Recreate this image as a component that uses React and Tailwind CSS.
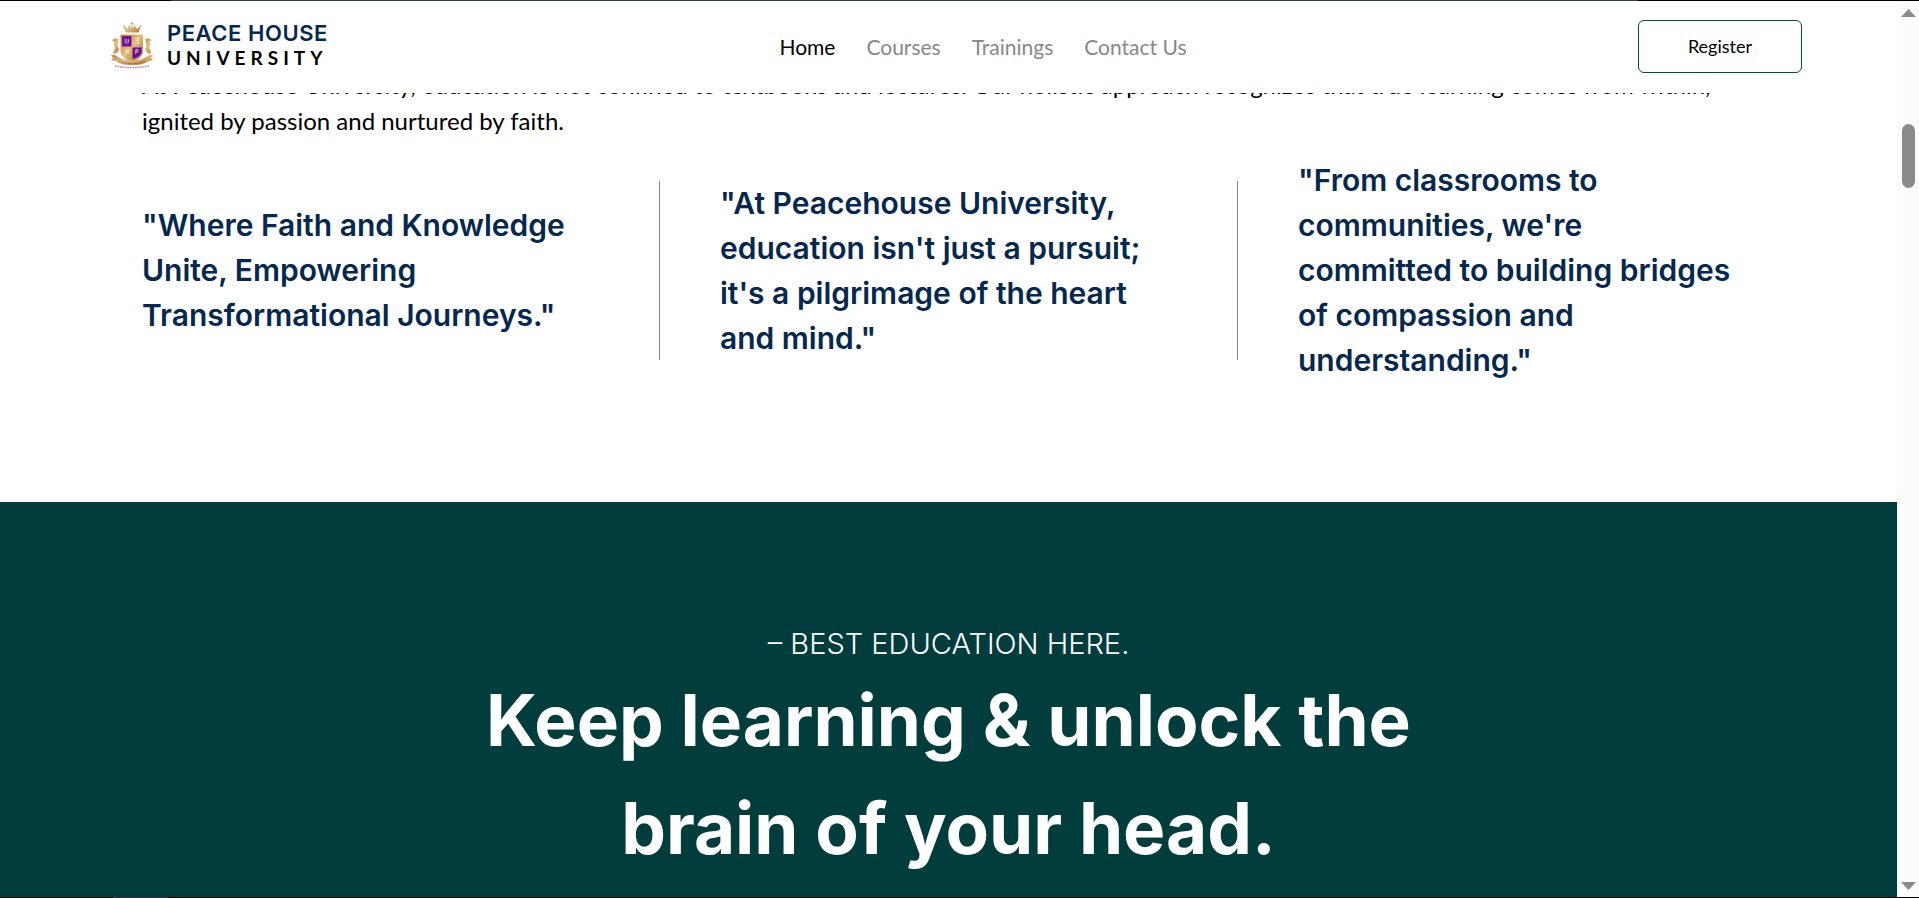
const navLinks = [
  { label: "Home", active: true },
  { label: "Courses" },
  { label: "Trainings" },
  { label: "Contact Us" },
];

function Crest() {
  return (
    <svg viewBox="0 0 44 48" className="h-12 w-11 shrink-0" aria-hidden="true">
      <defs>
        <linearGradient id="gold" x1="0" y1="0" x2="1" y2="1">
          <stop offset="0" stopColor="#b9803c" />
          <stop offset="0.45" stopColor="#e3bf82" />
          <stop offset="1" stopColor="#a8702c" />
        </linearGradient>
      </defs>
      {/* crown */}
      <path d="M15.5 10.5 14 4.5l3.600 2.300L19.500 3l2 2.800L22 1l.8 4.800L25 3l1.700 3.800L30.500 4.500l-1.700 6z" fill="url(#gold)" />
      <circle cx="22.200" cy="1.500" r="1.300" fill="#d9a95c" />
      <circle cx="14" cy="4.300" r="1" fill="#d9a95c" />
      <circle cx="30.500" cy="4.300" r="1" fill="#d9a95c" />
      {/* supporters */}
      <path d="M8.500 17c-3-2-5 0-6.500 1.500 2 .3 3 1.500 2 3C3 23 6 24.500 4.500 27c-1 1.500-1.500 3-1 5l4-1.500 1.500-3-1.500-4z" fill="url(#gold)" />
      <path d="M35.500 17c3-2 5 0 6.500 1.500-2 .3-3 1.500-2 3 1 1.500-2 3-.5 5.500 1 1.500 1.500 3 1 5l-4-1.500-1.500-3 1.500-4z" fill="url(#gold)" />
      {/* shield */}
      <path d="M10.500 12.500H33V29c0 5-5 8.500-11.300 11C15.500 37.500 10.500 34 10.500 29z" fill="url(#gold)" />
      <path d="M12 14h9.500v10.500H12z" fill="#6f1594" />
      <path d="M22.500 25.500H31.500V30c0 3-4 5.500-9 7z" fill="#6a0f92" />
      <path d="M15 17v3.500q1.700 1.500 3.500 0V17M16.800 17v3" stroke="#c9a0dc" strokeWidth="0.900" fill="none" />
      <path d="M25.500 16.500h3v5h-3M26 19h2" stroke="#f7e3bd" strokeWidth="1" fill="none" />
      <path d="M15 27.500h4v4h-4z" fill="#f0d7a8" />
      <path d="M25.800 32v-4.500h2v2.500h-2" stroke="#e4c5ee" strokeWidth="0.900" fill="none" />
      {/* ribbon */}
      <path d="M1 33l4.500.3c4.500 4 10 5 16.500 5s12-1 16.500-5L43 33l-2 3 2 2-5 1.300c-4 3-10 4-16 4s-12-1-16-4L1 38l2-2z" fill="url(#gold)" />
      <path d="M9 39.500q13 4.500 26 0" stroke="#8d5a22" strokeWidth="1" strokeDasharray="1.500 0.800" fill="none" />
      <path d="M5 43.800q17 3.600 34 0" stroke="#b98bd0" strokeWidth="1.400" strokeDasharray="1.800 0.700" fill="none" />
    </svg>
  );
}

function Header() {
  return (
    <header className="relative z-10 flex h-23 shrink-0 items-center justify-between bg-white pr-[95px] pb-0.5 pl-[110px]">
      <a href="#" className="flex items-center gap-[13px]">
        <Crest />
        <span className="flex flex-col">
          <span className="font-['Inter',sans-serif] text-[22px] leading-6 font-semibold tracking-wide text-[#04284f]">
            PEACE HOUSE
          </span>
          <span className="text-[19px] leading-[26px] font-bold tracking-[5px]">UNIVERSITY</span>
        </span>
      </a>
      <nav className="flex gap-[31px] pt-0.5 text-[21px] leading-8">
        {navLinks.map((link) => (
          <a key={link.label} href="#" className={link.active ? "text-black" : "text-[#888888]"}>
            {link.label}
          </a>
        ))}
      </nav>
      <button type="button" className="h-[53px] w-[164px] rounded-md border border-[#004d47] text-lg">
        Register
      </button>
    </header>
  );
}

function Quote({ children }) {
  return <blockquote className="flex-1">{children}</blockquote>;
}

function Divider() {
  return <div className="mx-[60px] h-[179px] w-px shrink-0 bg-[#888888]" />;
}

function Scrollbar() {
  return (
    <div className="flex w-[22px] shrink-0 flex-col items-center bg-[#fcfcfc] pt-2 pb-[7px]" aria-hidden="true">
      <svg viewBox="0 0 15 8" className="h-2 w-[15px]">
        <path d="M7.500 0 15 8H0z" fill="#8b8b8b" />
      </svg>
      <div className="mt-[107px] h-16 w-[13px] rounded-full bg-[#8b8b8b]" />
      <svg viewBox="0 0 15 8" className="mt-auto h-2 w-[15px]">
        <path d="M0 0h15L7.500 8z" fill="#8b8b8b" />
      </svg>
    </div>
  );
}

export default function App() {
  return (
    <div className="flex h-screen flex-col overflow-hidden bg-white font-['Lato',sans-serif] text-black">
      <div className="flex h-px shrink-0 bg-black">
        <div className="mr-[281px] ml-[171px] flex-1 bg-[#2f3a4f]" />
      </div>
      <div className="flex min-h-0 flex-1">
        <div className="flex min-w-0 flex-1 flex-col">
          <Header />
          <main className="flex min-h-0 flex-1 flex-col">
            <section className="-mt-[26px] shrink-0 px-[142px] pb-[119px]">
              <p className="text-2xl leading-9">
                At Peacehouse University, education is not confined to textbooks and lectures. Our holistic approach
                recognizes that true learning comes from within, ignited by passion and nurtured by faith.
              </p>
              <div className="mt-[19px] flex items-center font-['Inter',sans-serif] text-3xl leading-[45px] font-semibold text-[#04284f]">
                <Quote>"Where Faith and Knowledge Unite, Empowering Transformational Journeys."</Quote>
                <Divider />
                <Quote>
                  "At Peacehouse University, education isn't just a pursuit; it's a pilgrimage of the heart
                  <br />
                  and mind."
                </Quote>
                <Divider />
                <Quote>
                  "From classrooms to communities, we're
                  <br />
                  committed to building bridges of compassion and understanding."
                </Quote>
              </div>
            </section>
            <section className="flex flex-1 flex-col items-center bg-[#003d3c] pt-[119px] text-center font-['Inter',sans-serif] text-white">
              <p className="text-[29px] leading-[45px] font-light">– BEST EDUCATION HERE.</p>
              <h1 className="max-w-[1000px] text-[71px] leading-[108px] font-bold">
                Keep learning &amp; unlock the brain of your head.
              </h1>
            </section>
          </main>
        </div>
        <Scrollbar />
      </div>
      <div className="flex h-px shrink-0 bg-black">
        <div className="ml-[113px] w-[55px] bg-[#333640]" />
      </div>
    </div>
  );
}
